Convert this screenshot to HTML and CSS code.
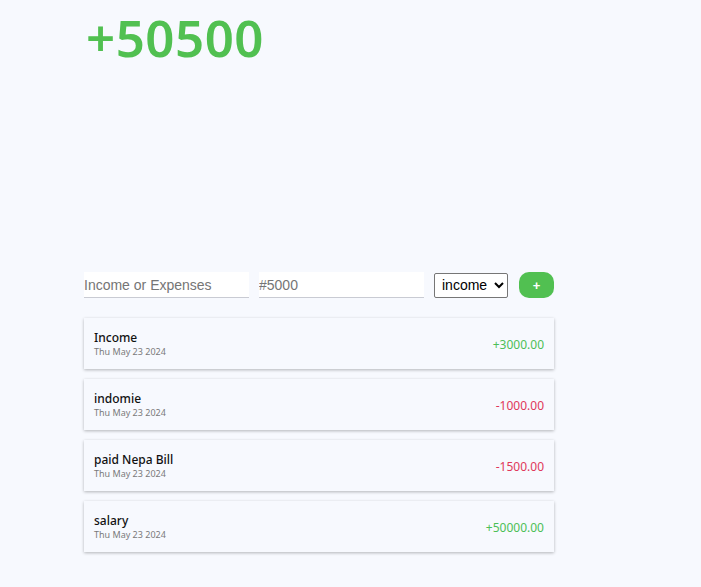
FILE: index.html
```html
<!DOCTYPE html>
<html lang="en">
<head>
<meta charset="utf-8">
<title>Expense Tracker</title>
<link rel="stylesheet" href="styles.css">
</head>
<body>
<main class="app">
  <h1 class="balance">+50500</h1>
  <div class="chart-space"></div>
  <form class="entry-form">
    <input class="field" type="text" placeholder="Income or Expenses">
    <input class="field" type="text" placeholder="#5000">
    <select class="type-select">
      <option>income</option>
      <option>expense</option>
    </select>
    <button class="add-btn" type="button">+</button>
  </form>
  <ul class="list">
    <li class="item">
      <div class="info"><div class="title">Income</div><div class="date">Thu May 23 2024</div></div>
      <div class="amount pos">+3000.00</div>
    </li>
    <li class="item">
      <div class="info"><div class="title">indomie</div><div class="date">Thu May 23 2024</div></div>
      <div class="amount neg">-1000.00</div>
    </li>
    <li class="item">
      <div class="info"><div class="title">paid Nepa Bill</div><div class="date">Thu May 23 2024</div></div>
      <div class="amount neg">-1500.00</div>
    </li>
    <li class="item">
      <div class="info"><div class="title">salary</div><div class="date">Thu May 23 2024</div></div>
      <div class="amount pos">+50000.00</div>
    </li>
  </ul>
</main>
</body>
</html>
```
FILE: styles.css
```css
html, body {
  margin: 0;
  padding: 0;
  background: #f7f9fe;
}
body {
  font-family: "Noto Sans", "Open Sans", sans-serif;
  color: #111;
}
.app {
  width: 470px;
  margin-left: 84px;
  padding-top: 7px;
  padding-bottom: 20px;
}
.balance {
  margin: 0 0 0 2px;
  font-size: 51px;
  line-height: 60px;
  font-weight: 600;
  letter-spacing: 0.5px;
  color: #51c051;
}
.chart-space {
  height: 205px;
}
.entry-form {
  display: flex;
  align-items: center;
  height: 26px;
}
.field {
  box-sizing: border-box;
  width: 165px;
  height: 26px;
  margin: 0 10px 0 0;
  padding: 0;
  border: none;
  border-bottom: 1px solid #c9cbd3;
  background: #fff;
  font-family: "Liberation Sans", Arial, sans-serif;
  font-size: 14px;
  color: #333;
  outline: none;
}
.field::placeholder {
  color: #757575;
}
.type-select {
  box-sizing: border-box;
  width: 74px;
  height: 25px;
  margin: 0 11px 0 0;
  padding: 0 0 0 3px;
  border: 1px solid #767676;
  border-radius: 2px;
  background: #fff;
  font-family: "Liberation Sans", Arial, sans-serif;
  font-size: 14px;
  color: #000;
}
.add-btn {
  width: 35px;
  height: 26px;
  padding: 0;
  border: none;
  border-radius: 10px;
  background: #51c051;
  color: #fff;
  font-family: "Liberation Sans", Arial, sans-serif;
  font-size: 13px;
  font-weight: 700;
}
.list {
  list-style: none;
  margin: 20px 0 0 0;
  padding: 0;
  display: flex;
  flex-direction: column;
  gap: 10px;
}
.item {
  box-sizing: border-box;
  height: 51px;
  padding: 0 10px;
  display: flex;
  align-items: center;
  justify-content: space-between;
  background: #f7f9fe;
  box-shadow: 0 1px 3px rgba(0, 0, 0, 0.28);
}
.title {
  font-size: 12px;
  line-height: 16px;
  font-weight: 500;
  color: #111;
}
.date {
  font-size: 9px;
  line-height: 12px;
  color: #7a7a7a;
}
.amount {
  font-size: 12px;
  line-height: 15px;
  padding-top: 2px;
}
.pos { color: #4cbf57; }
.neg { color: #e0385a; }
```
